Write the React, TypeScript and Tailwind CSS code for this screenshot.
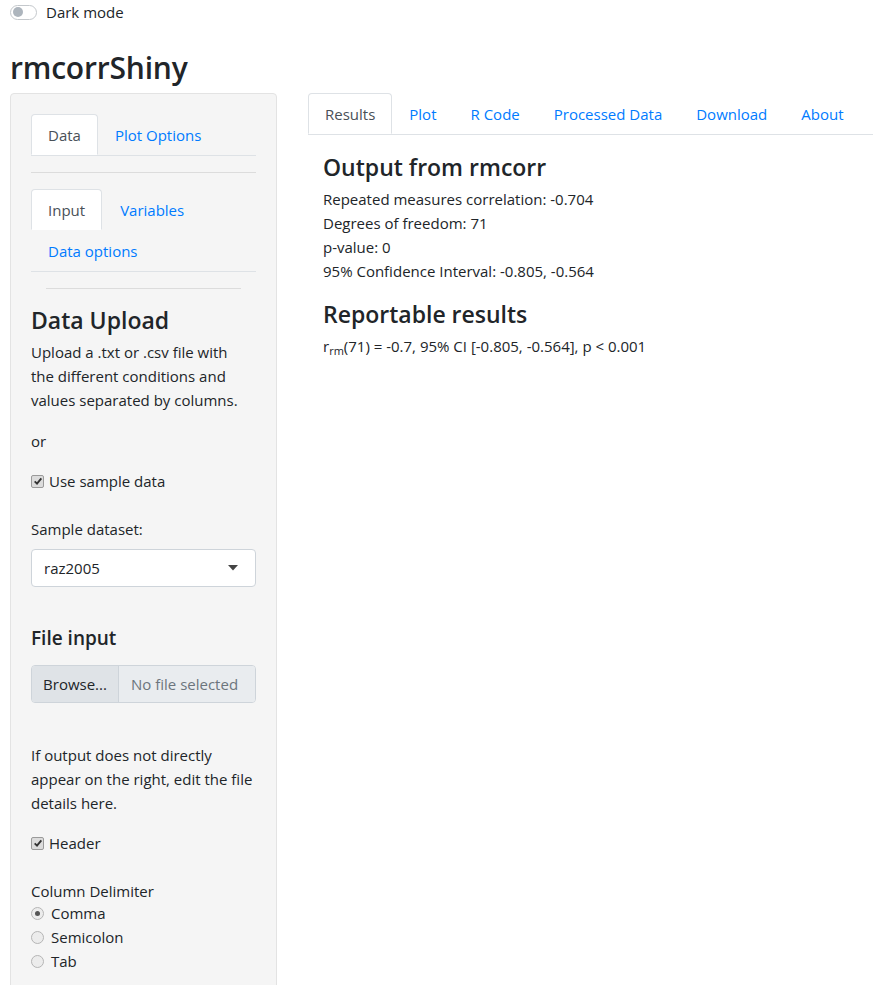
import React from "react";

const blue = "text-[#007bff]";

function Checkbox({ label }: { label: string }) {
  return (
    <label className="flex items-center gap-[5px] h-6">
      <span className="w-[13px] h-[13px] rounded-[2px] border border-[#9a9a9a] bg-[#dcdcdc] flex items-center justify-center">
        <svg viewBox="0 0 12 12" className="w-[10px] h-[10px]">
          <path d="M2 6.5 L4.8 9.2 L10 2.8" fill="none" stroke="#333" strokeWidth="2.2" />
        </svg>
      </span>
      <span>{label}</span>
    </label>
  );
}

function Radio({ label, checked }: { label: string; checked?: boolean }) {
  return (
    <label className="flex items-center gap-[7px] h-6">
      <span className="w-[13px] h-[13px] rounded-full border border-[#b5b5b5] bg-[#ececec] flex items-center justify-center">
        {checked && <span className="w-[5px] h-[5px] rounded-full bg-[#555]" />}
      </span>
      <span>{label}</span>
    </label>
  );
}

function Tab({ label, active, wide }: { label: string; active?: boolean; wide?: boolean }) {
  return active ? (
    <li className="-mb-px px-4 h-[41px] flex items-center border border-[#dee2e6] border-b-white rounded-t bg-white text-[#495057]">
      {label}
    </li>
  ) : (
    <li className={`${wide ? "px-[17px]" : "px-4"} h-[41px] flex items-center ${blue}`}>{label}</li>
  );
}

export default function App() {
  return (
    <div className="min-h-screen bg-white text-[#212529] font-['Open_Sans',sans-serif] text-[15px] leading-6 px-[10px]">
      {/* dark mode toggle */}
      <div className="flex items-center gap-[9px] h-6">
        <span className="w-[27px] h-[15px] rounded-full border border-[#c4c8cc] bg-white flex items-center px-[2px]">
          <span className="w-[10px] h-[10px] rounded-full bg-[#adb5bd]" />
        </span>
        <span>Dark mode</span>
      </div>

      <h2 className="mt-[25px] text-[30px] leading-[38px] font-semibold tracking-[-0.2px]">rmcorrShiny</h2>

      <div className="flex gap-[31px] mt-[6px]">
        {/* sidebar */}
        <div className="w-[267px] shrink-0 bg-[#f5f5f5] border border-[#e3e3e3] rounded px-5 pt-5 h-[900px]">
          <ul className="flex border-b border-[#dee2e6]">
            <Tab label="Data" active />
            <li className={`pl-[17px] h-[41px] flex items-center ${blue}`}>Plot Options</li>
          </ul>
          <hr className="mt-4 border-[#dcdcdc]" />
          <ul className="mt-4 flex flex-wrap border-b border-[#dee2e6]">
            <Tab label="Input" active />
            <li className={`pl-[18px] h-[41px] flex items-center ${blue}`}>Variables</li>
            <li className={`pl-[17px] h-[41px] flex items-center ${blue}`}>Data options</li>
          </ul>
          <div className="px-[15px]">
            <hr className="mt-4 border-[#dcdcdc]" />
          </div>

          <h3 className="mt-[17px] text-[23px] leading-[29px] font-semibold">Data Upload</h3>
          <p className="mt-[5px] pr-[14px]">
            Upload a .txt or .csv file with the different conditions and values separated by columns.
          </p>
          <p className="mt-[17px]">or</p>
          <div className="mt-4">
            <Checkbox label="Use sample data" />
          </div>
          <div className="mt-6">Sample dataset:</div>
          <div className="mt-2 h-[38px] bg-white border border-[#ced4da] rounded flex items-center justify-between pl-3 pr-[17px]">
            <span>raz2005</span>
            <svg viewBox="0 0 10 6" className="w-[10px] h-[6px]">
              <path d="M0 0 L10 0 L5 5.5 Z" fill="#444" />
            </svg>
          </div>

          <h4 className="mt-[39px] text-[19px] leading-6 font-semibold">File input</h4>
          <div className="mt-[15px] h-[38px] flex rounded border border-[#ced4da] overflow-hidden">
            <span className="w-[86px] bg-[#dfe3e7] flex items-center justify-center">Browse...</span>
            <span className="flex-1 bg-[#e9ecef] border-l border-[#ced4da] flex items-center pl-3 text-[#6c757d]">
              No file selected
            </span>
          </div>

          <p className="mt-10">If output does not directly appear on the right, edit the file details here.</p>
          <div className="mt-4">
            <Checkbox label="Header" />
          </div>
          <div className="mt-[25px] h-[21px] leading-[22px]">Column Delimiter</div>
          <Radio label="Comma" checked />
          <Radio label="Semicolon" />
          <Radio label="Tab" />
        </div>

        {/* main */}
        <div className="flex-1 min-w-0">
          <ul className="flex border-b border-[#dee2e6]">
            <Tab label="Results" active />
            <Tab label="Plot" wide />
            <Tab label="R Code" wide />
            <Tab label="Processed Data" wide />
            <Tab label="Download" wide />
            <Tab label="About" wide />
          </ul>
          <div className="px-[15px]">
            <h3 className="mt-[18px] text-[23px] leading-[29px] font-semibold">Output from rmcorr</h3>
            <div className="mt-[5px]">
              <div>Repeated measures correlation: -0.704</div>
              <div>Degrees of freedom: 71</div>
              <div>p-value: 0</div>
              <div>95% Confidence Interval: -0.805, -0.564</div>
            </div>
            <h3 className="mt-[17px] text-[23px] leading-[29px] font-semibold">Reportable results</h3>
            <div className="mt-[5px]">
              r<sub className="text-[11px]">rm</sub>(71) = -0.7, 95% CI [-0.805, -0.564], p &lt; 0.001
            </div>
          </div>
        </div>
      </div>
    </div>
  );
}
